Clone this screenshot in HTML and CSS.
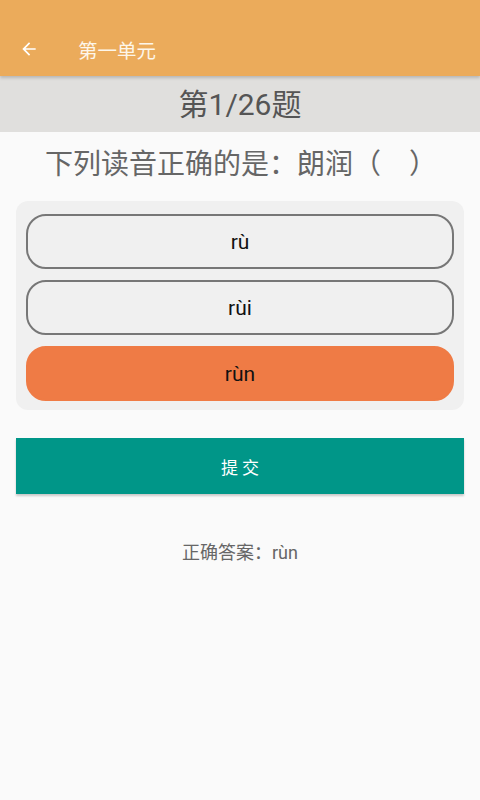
FILE: index.html
```html
<!DOCTYPE html>
<html lang="zh">
<head>
<meta charset="utf-8">
<link rel="stylesheet" href="styles.css">
</head>
<body>
<div class="app">
  <header class="appbar">
    <svg class="back" width="20" height="20" viewBox="0 0 24 24"><path d="M20 11H7.83l5.59-5.59L12 4l-8 8 8 8 1.41-1.41L7.83 13H20v-2z" fill="#fff"/></svg>
    <span class="title">第一单元</span>
  </header>
  <div class="progress">第1/26题</div>
  <div class="question">下列读音正确的是：朗润（　）</div>
  <div class="options">
    <div class="option">rù</div>
    <div class="option">rùi</div>
    <div class="option selected">rùn</div>
  </div>
  <div class="submit">提 交</div>
  <div class="answer">正确答案：rùn</div>
</div>
</body>
</html>
```
FILE: styles.css
```css
html, body {
  margin: 0;
  padding: 0;
  background: #fafafa;
  font-family: Roboto, "Noto Sans", "Noto Sans CJK SC", sans-serif;
}
.app {
  width: 480px;
  height: 800px;
  display: flex;
  flex-direction: column;
}
.appbar {
  height: 76px;
  background: #ebab5b;
  display: flex;
  align-items: center;
  box-shadow: 0 2px 3px rgba(0,0,0,0.18);
  position: relative;
  z-index: 1;
  box-sizing: border-box;
  padding-left: 19px;
  padding-top: 22px;
}
.title {
  margin-left: 39px;
  color: #fdf6ea;
  font-size: 19.5px;
}
.progress {
  height: 56px;
  background: #e0dfdd;
  color: #555;
  font-size: 30px;
  display: flex;
  align-items: center;
  justify-content: center;
  padding-bottom: 4px;
  box-sizing: border-box;
}
.question {
  text-align: center;
  font-size: 28px;
  color: #666;
  height: 69px;
  line-height: 66px;
  padding-left: 2px;
}
.options {
  margin: 0 16px;
  background: #f0f0f0;
  border-radius: 12px;
  padding: 13px 10px 9px;
  display: flex;
  flex-direction: column;
  gap: 11px;
}
.option {
  height: 55px;
  box-sizing: border-box;
  border: 2px solid #777;
  border-radius: 20px;
  display: flex;
  align-items: center;
  justify-content: center;
  font-size: 21px;
  color: #111;
}
.option.selected {
  background: #ef7b45;
  border-color: #ef7b45;
}
.submit {
  margin: 28px 16px 0;
  height: 56px;
  background: #009688;
  color: #fff;
  display: flex;
  align-items: center;
  justify-content: center;
  font-size: 17px;
  box-shadow: 0 2px 2px rgba(0,0,0,0.2);
}
.answer {
  text-align: center;
  color: #666;
  font-size: 18px;
  margin-top: 44px;
}
```
